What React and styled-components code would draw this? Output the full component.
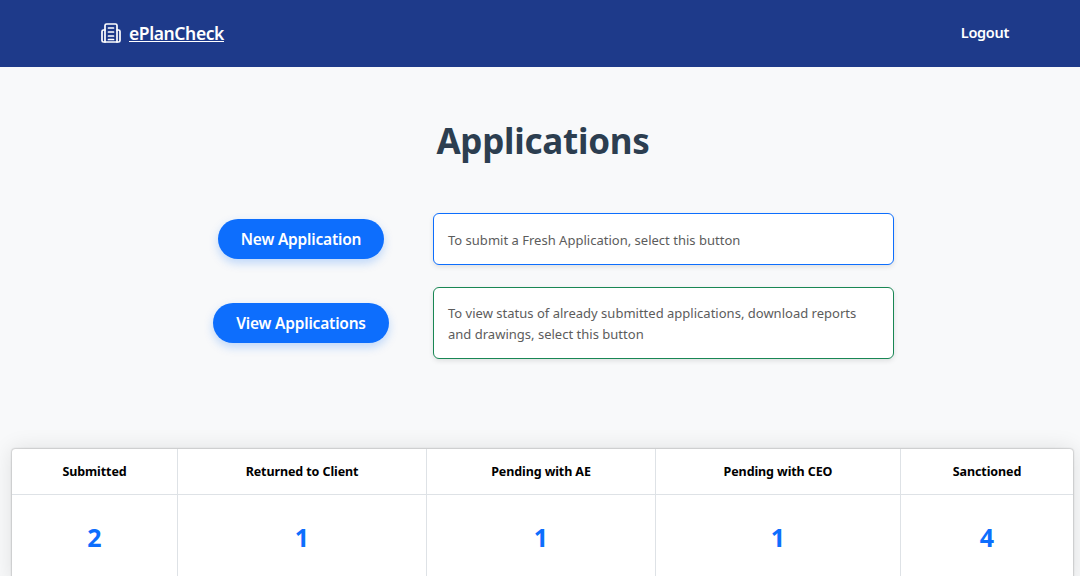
import React from 'react'
import styled, { createGlobalStyle } from 'styled-components'

const GlobalStyle = createGlobalStyle`
    html, body {
        margin: 0;
        padding: 0;
        height: 576px;
        overflow: hidden;
        background: #f8f9fa;
        font-family: "Noto Sans", "Open Sans", "Liberation Sans", sans-serif;
    }
    * {
        box-sizing: border-box;
    }
`
const Header = styled.header`
    height: 67px;
    background: #1e3a8a;
    display: flex;
    align-items: center;
    justify-content: space-between;
    padding: 0 71px 3px 100px;
`
const Brand = styled.a`
    display: flex;
    align-items: center;
    gap: 7px;
    color: #fff;
    font-size: 17.5px;
    font-weight: 600;
    letter-spacing: -0.4px;
`
const BrandName = styled.span`
    text-decoration: underline;
    padding-top: 2px;
`
const Logout = styled.a`
    color: #fff;
    font-size: 14.5px;
    font-weight: 600;
    letter-spacing: -0.3px;
`
const Main = styled.main`
    display: flex;
    flex-direction: column;
    align-items: center;
`
const Title = styled.h1`
    margin: 50px 0 49px;
    padding-left: 6px;
    height: 47px;
    line-height: 47px;
    font-size: 35px;
    font-weight: 700;
    letter-spacing: -0.25px;
    color: #2c3e50;
`
const Options = styled.div`
    display: flex;
    flex-direction: column;
    gap: 22px;
`
const Option = styled.div`
    display: grid;
    grid-template-columns: 176px 461px;
    column-gap: 44px;
    align-items: center;
    margin-left: 27px;
`
const ActionButton = styled.button`
    justify-self: center;
    height: 40px;
    padding: 0 23px;
    border: none;
    border-radius: 20px;
    background: #0d6efd;
    color: #fff;
    font-family: inherit;
    font-size: 15.5px;
    font-weight: 600;
    letter-spacing: -0.2px;
    white-space: nowrap;
    box-shadow: 0 4px 10px rgba(13, 110, 253, 0.25);
`
const Note = styled.div`
    min-height: 52px;
    background: #fff;
    border: 1px solid ${p => p.$color};
    border-radius: 6px;
    padding: ${p => p.$top}px 14px 13px;
    color: #5c5c5c;
    font-size: 13px;
    line-height: 21px;
    letter-spacing: 0.01px;
    box-shadow: 0 2px 5px rgba(0, 0, 0, 0.1);
`
const Stats = styled.div`
    margin: 90px 7px 0 12px;
    display: grid;
    grid-template-columns: 166px 249px 229px 245px 1fr;
    background: #fff;
    border-radius: 3px;
    box-shadow: 0 0 22px rgba(0, 0, 0, 0.11), 0 0 2px rgba(0, 0, 0, 0.45);
`
const HeadCell = styled.div`
    height: 46px;
    display: flex;
    align-items: center;
    justify-content: center;
    color: #000;
    font-size: 12.5px;
    font-weight: 700;
    letter-spacing: -0.1px;
    border-bottom: 1px solid #dee2e6;
    border-right: ${p => (p.$last ? 'none' : '1px solid #dee2e6')};
`
const ValueCell = styled.div`
    height: 88px;
    padding-bottom: 4px;
    display: flex;
    align-items: center;
    justify-content: center;
    color: #0d6efd;
    font-size: 25px;
    font-weight: 700;
    border-right: ${p => (p.$last ? 'none' : '1px solid #dee2e6')};
`

function BuildingIcon() {
    return (
        <svg width="22" height="22" viewBox="0 0 22 22" fill="none" stroke="#fff" strokeWidth="1.7" strokeLinejoin="round" strokeLinecap="round">
            <path d="M5 21V4.500A1.500 1.500 0 0 1 6.500 3h9A1.500 1.500 0 0 1 17 4.500V21" />
            <path d="M5 9H3.500A1.500 1.500 0 0 0 2 10.500V19.500A1.500 1.500 0 0 0 3.500 21H18.500A1.500 1.500 0 0 0 20 19.500V10.500A1.500 1.500 0 0 0 18.500 9H17" />
            <path d="M8.500 7h5M8.500 11h5M8.500 15h5M8.500 18.500h5" />
        </svg>
    )
}

const options = [
    { label: 'New Application', top: 16, color: '#0d6efd', note: 'To submit a Fresh Application, select this button' },
    { label: 'View Applications', top: 15, color: '#198754', note: 'To view status of already submitted applications, download reports and drawings, select this button' },
]

const stats = [
    { label: 'Submitted', value: 2 },
    { label: 'Returned to Client', value: 1 },
    { label: 'Pending with AE', value: 1 },
    { label: 'Pending with CEO', value: 1 },
    { label: 'Sanctioned', value: 4 },
]

export default function App() {
    return (
        <>
            <GlobalStyle />
            <Header>
                <Brand>
                    <BuildingIcon />
                    <BrandName>ePlanCheck</BrandName>
                </Brand>
                <Logout>Logout</Logout>
            </Header>
            <Main>
                <Title>Applications</Title>
                <Options>
                    {options.map(o => (
                        <Option key={o.label}>
                            <ActionButton>{o.label}</ActionButton>
                            <Note $color={o.color} $top={o.top}>{o.note}</Note>
                        </Option>
                    ))}
                </Options>
            </Main>
            <Stats>
                {stats.map((s, i) => (
                    <HeadCell key={s.label} $last={i === stats.length - 1}>{s.label}</HeadCell>
                ))}
                {stats.map((s, i) => (
                    <ValueCell key={s.label} $last={i === stats.length - 1}>{s.value}</ValueCell>
                ))}
            </Stats>
        </>
    )
}
